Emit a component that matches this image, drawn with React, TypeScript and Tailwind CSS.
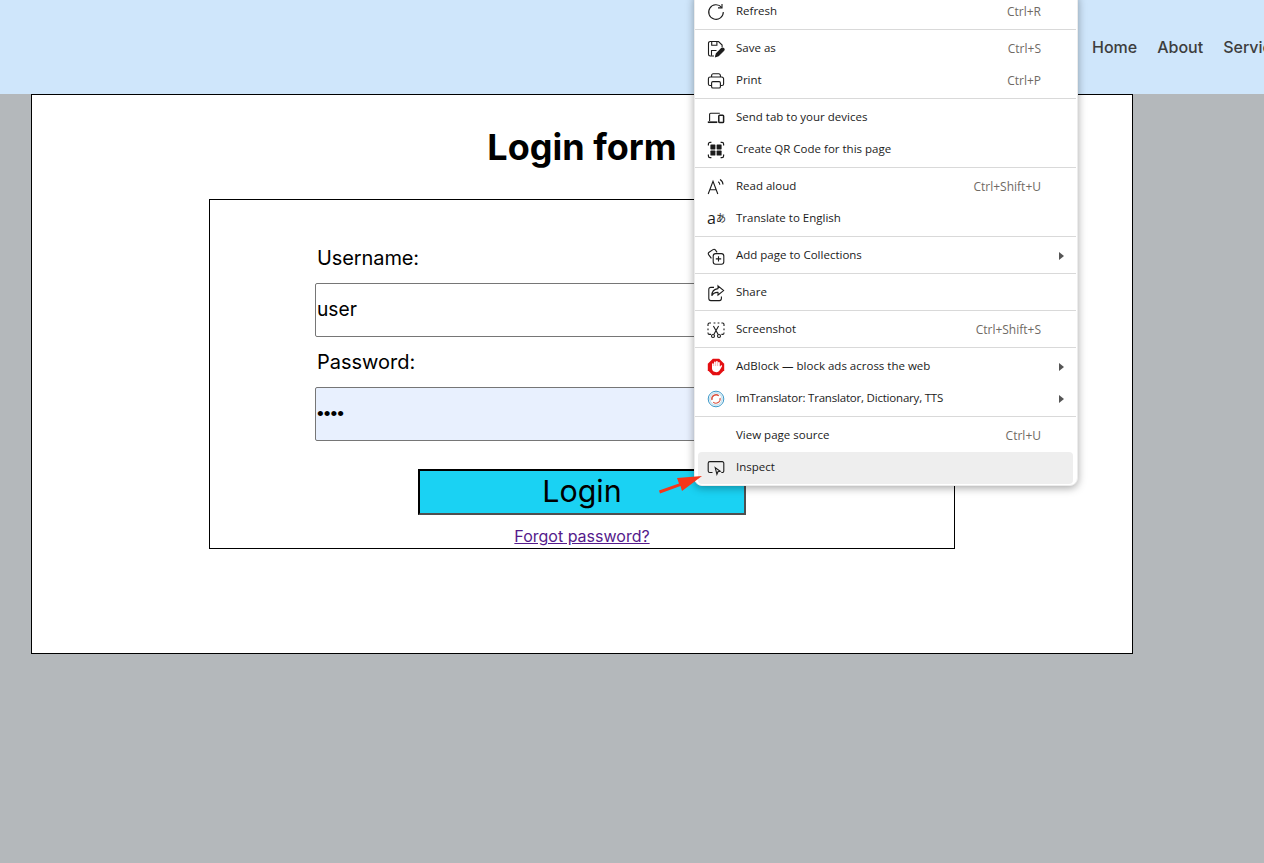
import React from 'react';

const base = 'w-[18px] h-[18px] shrink-0';

const RefreshIcon = () => (
  <svg viewBox="0 0 18 18" className={base} fill="none" stroke="#1b1b1b" strokeWidth="1.1">
    <path d="M14.6 4.4A7.3 7.3 0 1 0 16.3 9" />
    <path d="M15 .9v4h-4" />
  </svg>
);

const SaveIcon = () => (
  <svg viewBox="0 0 18 18" className={base} fill="none" stroke="#1b1b1b" strokeWidth="1.1">
    <path d="M7 16H3.2A1.7 1.7 0 0 1 1.5 14.3V3.2A1.7 1.7 0 0 1 3.2 1.5h8.3l3.6 3.5v2.2" />
    <path d="M4.7 1.7v3.6h5.2V1.7M4.5 15.8v-5.3h5" />
    <path d="M8.6 16.6l.7-2.9 5.2-5.2a1.4 1.4 0 0 1 2.1 2.1l-5.2 5.2z" fill="#1b1b1b" />
  </svg>
);

const PrintIcon = () => (
  <svg viewBox="0 0 18 18" className={base} fill="none" stroke="#1b1b1b" strokeWidth="1.1">
    <path d="M4.6 5V3.4A1.6 1.6 0 0 1 6.2 1.8h5.6a1.6 1.6 0 0 1 1.6 1.6V5" />
    <path d="M4.4 13.5H3a1.6 1.6 0 0 1-1.6-1.6V6.8A1.8 1.8 0 0 1 3.2 5h11.6a1.8 1.8 0 0 1 1.8 1.8v5.1a1.6 1.6 0 0 1-1.6 1.6h-1.4" />
    <rect x="4.6" y="9.6" width="8.8" height="6.4" rx="1.3" />
  </svg>
);

const DevicesIcon = () => (
  <svg viewBox="0 0 18 18" className={base} fill="none" stroke="#1b1b1b" strokeWidth="1.1">
    <path d="M2.6 12V5.2a1 1 0 0 1 1-1h9.2" />
    <path d="M.8 13.2h9.5" strokeWidth="1.7" />
    <rect x="11.8" y="6.2" width="4.8" height="7.4" rx=".9" strokeWidth="1.5" />
  </svg>
);

const QrIcon = () => (
  <svg viewBox="0 0 18 18" className={base} fill="none" stroke="#1b1b1b" strokeWidth="1.2">
    <path d="M1.4 4.4V3a1.6 1.6 0 0 1 1.6-1.6h1.4M13.6 1.4H15A1.6 1.6 0 0 1 16.6 3v1.4M16.6 13.6V15a1.6 1.6 0 0 1-1.6 1.6h-1.4M4.4 16.6H3A1.6 1.6 0 0 1 1.4 15v-1.4" />
    <rect x="3.4" y="3.4" width="5" height="5" rx=".6" fill="#1b1b1b" stroke="none" />
    <rect x="9.6" y="3.4" width="5" height="5" rx=".6" fill="#1b1b1b" stroke="none" />
    <rect x="3.4" y="9.6" width="5" height="5" rx=".6" fill="#1b1b1b" stroke="none" />
    <rect x="9.6" y="9.6" width="5" height="5" rx=".6" fill="#1b1b1b" stroke="none" />
  </svg>
);

const ReadAloudIcon = () => (
  <svg viewBox="0 0 18 18" className={base} fill="none" stroke="#1b1b1b" strokeWidth="1.1">
    <path d="M1.2 16L6 3.4 10.8 16M2.8 11.8h6.4" />
    <path d="M11.2 3.8a3.6 3.6 0 0 1 1.6 3M13 1.6a6 6 0 0 1 3 5" />
  </svg>
);

// latin a + hiragana, the way the edge icon shows it
const TranslateIcon = () => (
  <span className={`${base} flex items-center whitespace-nowrap leading-none text-[#1b1b1b] -mt-[3px]`}>
    <span className="text-[16px] font-['Open_Sans',sans-serif]">a</span>
    <span className="text-[10px] font-['Noto_Sans_CJK_JP',sans-serif]">あ</span>
  </span>
);

const CollectionsIcon = () => (
  <svg viewBox="0 0 18 18" className={base} fill="none" stroke="#1b1b1b" strokeWidth="1.1">
    <path d="M4.4 11.4L1.6 7.6a1.7 1.7 0 0 1 .5-2.3L6 2.6a1.7 1.7 0 0 1 2.3.3l1.8 2.4" />
    <rect x="6.2" y="6.6" width="10.6" height="10.6" rx="2.4" />
    <path d="M11.5 9.2v5.4M8.8 11.9h5.4" />
  </svg>
);

const ShareIcon = () => (
  <svg viewBox="0 0 18 18" className={base} fill="none" stroke="#1b1b1b" strokeWidth="1.1">
    <path d="M7 3.4H3.8a2 2 0 0 0-2 2v9.2a2 2 0 0 0 2 2h8.6a2 2 0 0 0 2-2v-2" />
    <path d="M11 1.8l5.6 4.8L11 11V8.4c-3-.2-5 1-6.2 3.4 0-4.2 2.4-6.8 6.2-7.2z" />
  </svg>
);

const ScreenshotIcon = () => (
  <svg viewBox="0 0 18 18" className={base} fill="none" stroke="#1b1b1b" strokeWidth="1.1">
    <path d="M1 5V3.4A1.4 1.4 0 0 1 2.4 2H4M6.6 2h1.8M10.6 2h1.8M14.4 2h1.2A1.4 1.4 0 0 1 17 3.4V5M17 7.4v1.8M1 7.4v1.8M1 11.4v.6A1.4 1.4 0 0 0 2.4 13.4H4M14.4 13.4h1.2A1.4 1.4 0 0 0 17 12v-.6" />
    <path d="M6.4 5l4.8 8.6M11.6 5l-4.8 8.6" />
    <circle cx="6" cy="15" r="1.5" />
    <circle cx="12" cy="15" r="1.5" />
  </svg>
);

const AdBlockIcon = () => (
  <svg viewBox="0 0 18 18" className={base}>
    <path d="M5.8.8h6.4l5 5v6.4l-5 5H5.8l-5-5V5.8z" fill="#e40f12" />
    <path d="M5.9 9V6M7.9 8V4.4M9.9 8V3.8M11.9 8.4V4.8" stroke="#fff" strokeWidth="1.7" strokeLinecap="round" />
    <path d="M5 8h7.8v1l1-1.4c.7-.8 1.6 0 1.1.8l-1.9 3.4c-.8 1.4-1.9 2.4-3.6 2.4-2.6 0-4.4-1.4-4.4-3.6z" fill="#fff" />
  </svg>
);

const ImTranslatorIcon = () => (
  <svg viewBox="0 0 18 18" className={base} fill="none">
    <circle cx="9" cy="9" r="7.8" stroke="#3f9ac9" strokeWidth="1" />
    <circle cx="9" cy="9" r="6.2" stroke="#a8d4ea" strokeWidth="1" />
    <path d="M5 10a4.2 4.2 0 0 1 6.8-4.2" stroke="#d8503e" strokeWidth="1.4" />
    <path d="M13 8a4.2 4.2 0 0 1-6.8 4.2" stroke="#d8503e" strokeWidth="1.1" />
  </svg>
);

const InspectIcon = () => (
  <svg viewBox="0 0 18 18" className={base} fill="none" stroke="#1b1b1b" strokeWidth="1.1">
    <path d="M5.5 13.5H2.8a1.6 1.6 0 0 1-1.6-1.6V4.2a1.6 1.6 0 0 1 1.6-1.6h12.4a1.6 1.6 0 0 1 1.6 1.6v7.7a1.6 1.6 0 0 1-1.6 1.6h-.9" />
    <path d="M8.2 8.6l5 3.6-2.3.5-1 2.6z" />
  </svg>
);

const BlankIcon = () => <span className={base} />;

type MenuItem = { label: string; icon: React.ReactNode; shortcut?: string; sub?: boolean; active?: boolean; tight?: boolean };

const groups: MenuItem[][] = [
  [{ label: 'Refresh', icon: <RefreshIcon />, shortcut: 'Ctrl+R' }],
  [
    { label: 'Save as', icon: <SaveIcon />, shortcut: 'Ctrl+S' },
    { label: 'Print', icon: <PrintIcon />, shortcut: 'Ctrl+P' },
  ],
  [
    { label: 'Send tab to your devices', icon: <DevicesIcon /> },
    { label: 'Create QR Code for this page', icon: <QrIcon /> },
  ],
  [
    { label: 'Read aloud', icon: <ReadAloudIcon />, shortcut: 'Ctrl+Shift+U' },
    { label: 'Translate to English', icon: <TranslateIcon /> },
  ],
  [{ label: 'Add page to Collections', icon: <CollectionsIcon />, sub: true }],
  [{ label: 'Share', icon: <ShareIcon /> }],
  [{ label: 'Screenshot', icon: <ScreenshotIcon />, shortcut: 'Ctrl+Shift+S' }],
  [
    { label: 'AdBlock — block ads across the web', icon: <AdBlockIcon />, sub: true },
    { label: 'ImTranslator: Translator, Dictionary, TTS', icon: <ImTranslatorIcon />, sub: true, tight: true },
  ],
  [
    { label: 'View page source', icon: <BlankIcon />, shortcut: 'Ctrl+U' },
    { label: 'Inspect', icon: <InspectIcon />, active: true },
  ],
];

function ContextMenu() {
  return (
    <div className="absolute left-[694px] top-[-8px] w-[384px] bg-white border border-[#ececec] rounded-lg shadow-[0_2px_8px_rgba(0,0,0,0.35)] pt-[3px] pb-[1px] font-['Open_Sans',sans-serif] text-[12px] text-[#1b1b1b]">
      {groups.map((group, i) => (
        <div key={i}>
          {i > 0 && <div className="h-px bg-[#d9d9d9] mt-px mb-[3px] mr-px" />}
          {group.map((item) => (
            <div
              key={item.label}
              className={`h-8 ml-[3px] mr-[4px] pl-[9px] rounded flex items-center gap-[11px] ${item.active ? 'bg-[#eeeeee]' : ''}`}
            >
              {item.icon}
              <span className={`flex-1 whitespace-nowrap text-[11.5px] -mt-[2px] ${item.tight ? 'tracking-[-0.2px]' : ''}`}>{item.label}</span>
              {item.shortcut && <span className="text-[#6f6a64] whitespace-nowrap">{item.shortcut}</span>}
              <span className="w-[21px] flex justify-end pr-[9px]">
                {item.sub && <span className="w-0 h-0 border-y-[4px] border-y-transparent border-l-[5px] border-l-[#555]" />}
              </span>
            </div>
          ))}
        </div>
      ))}
    </div>
  );
}

export default function App() {
  return (
    <div className="relative w-[1264px] h-[863px] overflow-hidden bg-[#b4b8bb] font-['Inter',sans-serif] text-black">
      <header className="h-[94px] bg-[#cfe6fb] flex items-center pl-[1092px] whitespace-nowrap">
        <nav className="flex gap-5 text-[16px] font-medium text-[#3d3d3d]">
          <span>Home</span>
          <span>About</span>
          <span>Services</span>
        </nav>
      </header>

      <main className="ml-[31px] w-[1102px] h-[560px] bg-white border border-black pl-[177px] pt-[30px]">
        <h1 className="w-[746px] text-center text-[36px] leading-[44px] font-bold">Login form</h1>
        <form className="mt-[30px] w-[746px] h-[350px] border border-black px-[105px] pt-[44px] flex flex-col">
          <label className="pl-[2px] text-[20px] leading-[28px] tracking-[-0.1px]">Username:</label>
          <input
            readOnly
            value="user"
            className="mt-[11px] h-[54px] w-full px-px pb-[2px] text-[19.2px] border border-[#767676] rounded-[2px] bg-white outline-none"
          />
          <label className="mt-[11px] pl-[2px] text-[20px] leading-[28px]">Password:</label>
          <input
            readOnly
            type="password"
            value="user"
            className="mt-[11px] h-[54px] w-full px-px text-[19.2px] font-['Liberation_Sans',sans-serif] border border-[#767676] rounded-[2px] bg-[#e8f0fe] outline-none"
          />
          <button
            type="button"
            className="mt-[28px] self-center w-[328px] h-[46px] pb-[2px] bg-[#1ad2f3] text-[30.4px] leading-none border-2 border-t-black border-l-black border-r-[#4f4f4f] border-b-[#4f4f4f]"
          >
            Login
          </button>
          <a className="mt-[11px] self-center text-[16px] leading-[20px] underline text-[#551a8b]">Forgot password?</a>
        </form>
      </main>

      <ContextMenu />

      <svg viewBox="0 0 50 22" className="absolute left-[657px] top-[474px] w-[50px] h-[22px]">
        <path d="M2 16.5L22 9.5L20 4L45 2L25 17L23.5 12L3 19.5z" fill="#f5361a" />
      </svg>
    </div>
  );
}
